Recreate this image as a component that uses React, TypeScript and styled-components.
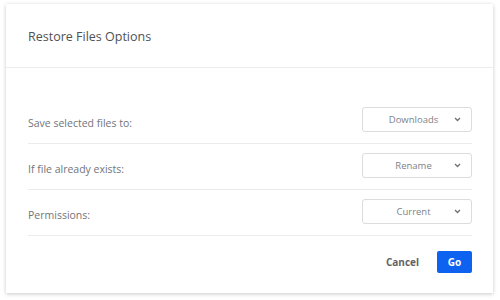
import styled, { createGlobalStyle } from "styled-components"

const Global = createGlobalStyle`
  html, body { margin: 0; padding: 0; background: #ffffff; }
  body { font-family: "Open Sans", "Liberation Sans", sans-serif; }
`

const Page = styled.div`
  width: 500px;
  height: 300px;
  padding: 4px 7px 7px 6px;
  box-sizing: border-box;
`

const Dialog = styled.div`
  height: 289px;
  background: #fff;
  box-shadow: 0 1px 4px rgba(0, 0, 0, 0.22);
  display: flex;
  flex-direction: column;
`

const Header = styled.header`
  height: 64px;
  border-bottom: 1px solid #ececec;
  display: flex;
  align-items: center;
  padding-left: 22px;
  box-sizing: border-box;
`

const Title = styled.h1`
  margin: 0;
  font-size: 12.5px;
  font-weight: 400;
  color: #4f5253;
  padding-top: 2px;
`

const Body = styled.div`
  padding: 30px 21px 0 22px;
`

const Row = styled.div`
  height: 46px;
  box-sizing: border-box;
  border-bottom: 1px solid #ececec;
  display: flex;
  align-items: center;
  justify-content: space-between;
`

const Label = styled.span`
  font-size: 10.5px;
  color: #71757a;
  padding-top: 4px;
`

const Select = styled.button`
  width: 110px;
  height: 25px;
  margin-bottom: 2px;
  border: 1px solid #dcdcdc;
  border-radius: 3px;
  background: #fff;
  display: flex;
  align-items: center;
  padding: 0 10px 0 0;
  box-sizing: border-box;
  font-family: inherit;
  cursor: pointer;
`

const SelectText = styled.span`
  flex: 1;
  text-align: center;
  font-size: 9.5px;
  color: #7e8287;
  padding-left: 10px;
`

const Footer = styled.footer`
  display: flex;
  justify-content: flex-end;
  align-items: center;
  gap: 18px;
  padding: 15px 21px 0 0;
`

const TextButton = styled.button`
  border: none;
  background: none;
  font-family: inherit;
  font-weight: 700;
  font-size: 10px;
  color: #5f6368;
  padding: 0;
`

const PrimaryButton = styled.button`
  width: 35px;
  height: 22px;
  border: none;
  border-radius: 2px;
  background: #0d63f0;
  color: #fff;
  font-family: inherit;
  font-weight: 700;
  font-size: 10px;
  padding: 0;
`

function Chevron() {
  return (
    <svg width="7" height="5" viewBox="0 0 7 5">
      <path d="M1 1l2.5 2.5L6 1" fill="none" stroke="#6d7175" strokeWidth="1.3" />
    </svg>
  )
}

const rows = [
  { label: "Save selected files to:", value: "Downloads" },
  { label: "If file already exists:", value: "Rename" },
  { label: "Permissions:", value: "Current" },
]

export default function App() {
  return (
    <Page>
      <Global />
      <Dialog>
        <Header>
          <Title>Restore Files Options</Title>
        </Header>
        <Body>
          {rows.map(r => (
            <Row key={r.label}>
              <Label>{r.label}</Label>
              <Select>
                <SelectText>{r.value}</SelectText>
                <Chevron />
              </Select>
            </Row>
          ))}
        </Body>
        <Footer>
          <TextButton>Cancel</TextButton>
          <PrimaryButton>Go</PrimaryButton>
        </Footer>
      </Dialog>
    </Page>
  )
}
